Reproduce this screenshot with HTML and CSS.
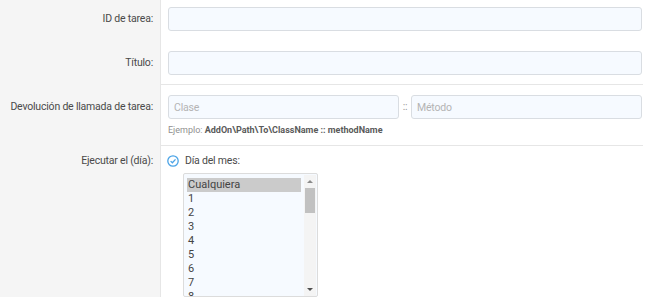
FILE: index.html
```html
<!DOCTYPE html>
<html>
<head>
  <title>Tarea programada</title>
  <link rel="stylesheet" href="styles.css">
</head>
<body>
  <div class="form">
    <div class="row">
      <div class="label">ID de tarea:</div>
      <div class="field field-tight">
        <input type="text" class="input">
      </div>
    </div>

    <div class="row">
      <div class="label">Título:</div>
      <div class="field field-line">
        <input type="text" class="input">
      </div>
    </div>

    <div class="row">
      <div class="label label-pad">Devolución de llamada de tarea:</div>
      <div class="field field-line field-pad">
        <div class="callback">
          <input type="text" class="input" placeholder="Clase">
          <span class="sep">::</span>
          <input type="text" class="input" placeholder="Método">
        </div>
        <p class="hint">Ejemplo: <b>AddOn\Path\To\ClassName :: methodName</b></p>
      </div>
    </div>

    <div class="row row-last">
      <div class="label label-day">Ejecutar el (día):</div>
      <div class="field field-day">
        <div class="radio">
          <svg class="radio-icon" width="12" height="12" viewBox="0 0 12 12">
            <circle cx="6" cy="6" r="5.2" fill="none" stroke="#4aa3e6" stroke-width="1.3"/>
            <path d="M3.6 6.1 L5.4 7.8 L8.5 4.4" fill="none" stroke="#4aa3e6" stroke-width="1.3"/>
          </svg>
          <span>Día del mes:</span>
        </div>
        <div class="listbox">
          <ul class="options" id="day-options"></ul>
          <div class="scrollbar">
            <span class="arrow arrow-up"></span>
            <span class="thumb"></span>
            <span class="track"></span>
            <span class="arrow arrow-down"></span>
          </div>
        </div>
      </div>
    </div>
  </div>

  <script>
    // fill the day list
    const dayOptions = document.querySelector('#day-options');
    const days = ['Cualquiera'];
    for (let i = 1; i <= 8; i++) {
      days.push(String(i));
    }
    days.forEach(function(day, index) {
      const li = document.createElement('li');
      li.innerText = day;
      if (index === 0) {
        li.classList.add('selected');
      }
      dayOptions.appendChild(li);
    });
  </script>
</body>
</html>
```

FILE: styles.css
```css
body {
  margin: 0;
  padding: 0;
  font-family: Roboto, "Open Sans", sans-serif;
  font-size: 10.5px;
  line-height: 14px;
  letter-spacing: -0.2px;
  color: #4a4a4a;
  background-color: #fff;
  overflow: hidden;
}

.form {
  display: flex;
  flex-direction: column;
}

.row {
  display: flex;
}

.label {
  width: 153px;
  flex: none;
  padding-right: 7px;
  padding-top: 12px;
  text-align: right;
  white-space: nowrap;
  background-color: #f5f5f5;
  border-right: 1px solid #e6e6e6;
}

.label-pad {
  padding-top: 15px;
}

.label-day {
  padding-top: 8px;
}

.field {
  flex: 1;
  padding: 7px 0 0 7px;
  margin-right: 6px;
}

.field-tight {
  padding-bottom: 13px;
}

.field-line {
  padding-bottom: 9px;
  border-bottom: 1px solid #e6e6e6;
}

.field-pad {
  padding-top: 10px;
  padding-bottom: 8px;
}

.input {
  display: block;
  box-sizing: border-box;
  width: calc(100% - 1px);
  height: 24px;
  padding: 0 5px;
  font-family: inherit;
  font-size: 10.5px;
  letter-spacing: -0.2px;
  color: #333;
  background-color: #f6faff;
  border: 1px solid #d9dde2;
  border-radius: 3px;
  outline: none;
}

.input::placeholder {
  color: #b4b4b4;
}

.callback {
  display: flex;
  align-items: center;
  padding-right: 1px;
}

.callback .input {
  flex: 1;
  width: auto;
}

.sep {
  width: 12px;
  text-align: center;
  color: #999;
}

.hint {
  margin: 4px 0 0 0;
  font-size: 9px;
  line-height: 14px;
  letter-spacing: 0;
  color: #8f8f8f;
}

.hint b {
  font-weight: 700;
  color: #5a5a5a;
}

.field-day {
  padding-top: 8px;
  padding-left: 5px;
}

.radio {
  display: flex;
  align-items: center;
  gap: 6px;
  padding-left: 1px;
}

.radio-icon {
  display: block;
}

.listbox {
  display: flex;
  box-sizing: border-box;
  width: 135px;
  height: 124px;
  margin: 5px 0 0 17px;
  padding: 4px 1px 0 3px;
  background-color: #f6faff;
  border: 1px solid #dcdcdc;
  border-radius: 2px;
  overflow: hidden;
}

.options {
  flex: 1;
  margin: 0;
  padding: 0;
  list-style: none;
  font-size: 11px;
  line-height: 14px;
  letter-spacing: 0;
}

.options li {
  padding-left: 1px;
  color: #444;
}

.options li.selected {
  background-color: #cbcbcb;
}

.scrollbar {
  width: 12px;
  margin-left: 3px;
  margin-top: -3px;
  display: flex;
  flex-direction: column;
  align-items: center;
  background-color: #f4f4f4;
}

.arrow {
  width: 0;
  height: 0;
  margin: 5px 0;
  border-left: 3px solid transparent;
  border-right: 3px solid transparent;
}

.arrow-up {
  border-bottom: 3px solid #8a8a8a;
}

.arrow-down {
  border-top: 3px solid #505050;
}

.thumb {
  width: 10px;
  height: 25px;
  background-color: #c1c1c1;
}

.track {
  flex: 1;
}
```
